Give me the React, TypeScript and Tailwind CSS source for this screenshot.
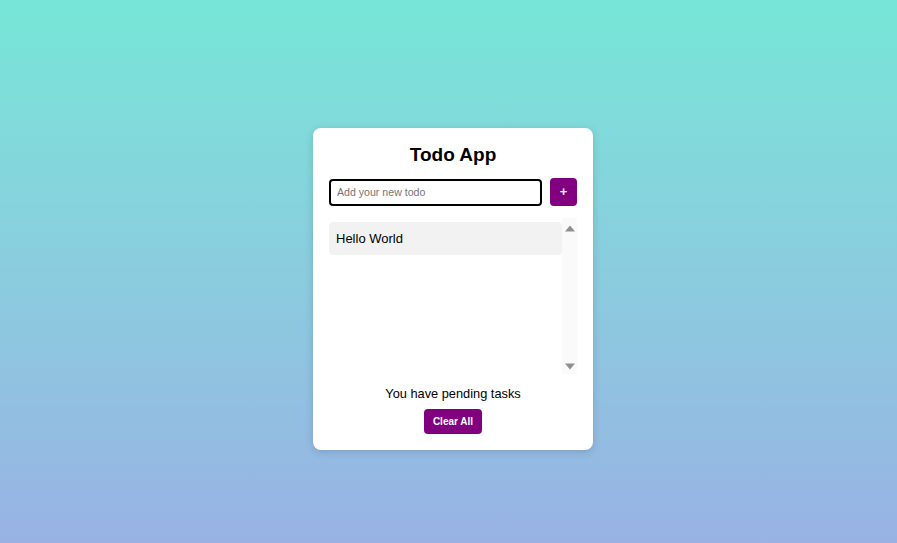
import React, { useState } from 'react';

const Arrow = ({ down }: { down?: boolean }) => (
    <svg width="10" height="7" viewBox="0 0 10 7" className="block">
        <path d={down ? 'M0 0.5h10L5 6.5z' : 'M5 0.5L10 6.5H0z'} fill="#8f8f8f" />
    </svg>
);

export default function App() {
    const [todos, setTodos] = useState<string[]>(['Hello World']);
    const [text, setText] = useState('');

    const add = () => {
        if (!text.trim()) return;
        setTodos([...todos, text.trim()]);
        setText('');
    };

    return (
        <div className="min-h-[543px] bg-gradient-to-b from-[#76e6d7] to-[#98b2e4] flex justify-center pl-[9px] pt-[128px] font-['Liberation_Sans',Arial,sans-serif]">
            <div className="w-[280px] h-[322px] bg-white rounded-lg shadow-[0_2px_8px_rgba(0,0,0,0.15)] px-4 pt-4 pb-4 flex flex-col">
                <h3 className="text-[19px] leading-[21px] font-bold text-black text-center mb-[13px]">Todo App</h3>

                <div className="flex items-center gap-2">
                    <input
                        value={text}
                        onChange={e => setText(e.target.value)}
                        placeholder="Add your new todo"
                        className="w-[213px] h-[27px] border-2 border-black rounded px-[6px] text-[10.6px] placeholder:text-[#757575] outline-none"
                    />
                    <button onClick={add} className="w-[27px] h-[28px] bg-[#800080] text-white rounded text-[13px] font-bold flex items-center justify-center">
                        +
                    </button>
                </div>

                <div className="mt-3 h-[156px] flex">
                    <ul className="flex-1 overflow-hidden pt-1">
                        {todos.map((t, i) => (
                            <li key={i} className="h-[33px] bg-[#f2f2f2] rounded px-[7px] flex items-center text-[13px] text-black mb-2">
                                {t}
                            </li>
                        ))}
                    </ul>
                    {/* scrollbar */}
                    <div className="w-[15px] bg-[#fafafa] flex flex-col items-center justify-between pt-[7px] pb-[4px]">
                        <Arrow />
                        <Arrow down />
                    </div>
                </div>

                <p className="text-[12.8px] leading-[15px] text-black text-center mt-[12px]">You have pending tasks</p>
                <div className="flex justify-center mt-[8px]">
                    <button onClick={() => setTodos([])} className="h-[25px] px-[9px] bg-[#800080] text-white rounded text-[10px] font-bold">
                        Clear All
                    </button>
                </div>
            </div>
        </div>
    );
}
